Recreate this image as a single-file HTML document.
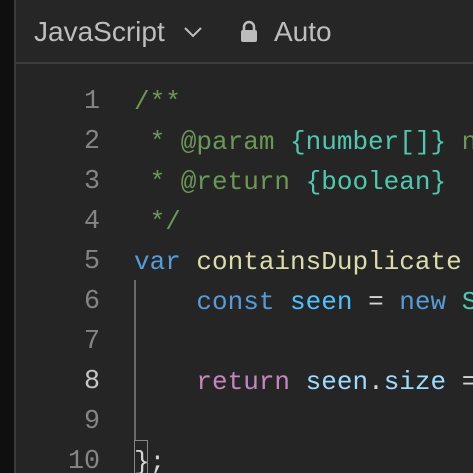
<!DOCTYPE html>
<html><head><style>
html,body{margin:0;width:473px;height:473px;overflow:hidden}
body{background:#252526;position:relative;font-family:"Liberation Sans",sans-serif}
.strip{position:absolute;left:0;top:0;width:14px;height:473px;background:#0f0f0f}
.vb{position:absolute;left:14px;top:0;width:2px;height:473px;background:#3a3a3a}
.hdr{position:absolute;left:16px;top:0;right:0;height:62px;border-bottom:2px solid #3c3c3c;background:#262626}
.ht{position:absolute;top:14px;font-size:28px;color:#bdbdbd;line-height:36px}
.ln{position:absolute;left:16px;width:84px;text-align:right;font-family:"Liberation Mono",monospace;font-size:26.7px;color:#858585;line-height:40px}
.code{position:absolute;left:134px;right:0;overflow:hidden;font-family:"Liberation Mono",monospace;font-size:26px;line-height:40px;white-space:pre;color:#d4d4d4}
.c{color:#6a9955}.k{color:#569cd6}.t{color:#4ec9b0}.f{color:#dcdcaa}.v{color:#9cdcfe}.cv{color:#4fc1ff}.r{color:#c586c0}
</style></head><body>
<div class="strip"></div><div class="vb"></div>
<div class="hdr"></div>
<div class="ht" style="left:34px">JavaScript</div>
<svg style="position:absolute;left:183px;top:26px" width="20" height="12"><path d="M2 2 L10 10 L18 2" stroke="#bdbdbd" stroke-width="2" fill="none"/></svg>
<svg style="position:absolute;left:240px;top:20px" width="18" height="22"><path d="M4 10 V7 a5 5 0 0 1 10 0 V10" stroke="#bdbdbd" stroke-width="2.5" fill="none"/><rect x="1" y="10" width="16" height="12" rx="2" fill="#bdbdbd"/></svg>
<div class="ht" style="left:274px">Auto</div>
<div class="ln" style="top:82px">1<br>2<br>3<br>4<br>5<br>6<br>7<br><span style="color:#c6c6c6">8</span><br>9<br>10</div>
<div style="position:absolute;left:134px;top:280px;width:2px;height:160px;background:#6a6a6a"></div>
<div style="position:absolute;left:134px;top:440px;width:14px;height:34px;border:1px solid #888;box-sizing:border-box"></div>
<div class="code" style="top:82px"><span class="c">/**</span>
<span class="c"> * @param <span class="t">{number[]}</span> nums</span>
<span class="c"> * @return <span class="t">{boolean}</span></span>
<span class="c"> */</span>
<span class="k">var</span> <span class="f">containsDuplicate</span> = <span class="k">function</span>
    <span class="k">const</span> <span class="cv">seen</span> = <span class="k">new</span> <span class="t">Set</span>

    <span class="r">return</span> <span class="v">seen</span>.<span class="v">size</span> ===

};</div>
</body></html>
